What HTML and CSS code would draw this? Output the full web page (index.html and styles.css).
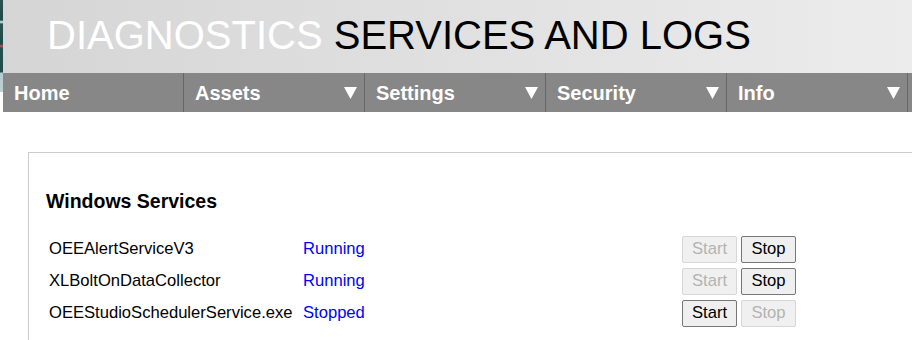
FILE: index.html
```html
<!DOCTYPE html>
<html>
<head>
<meta charset="utf-8">
<link rel="stylesheet" href="styles.css">
</head>
<body>
<div class="top">
  <div class="strip"></div>
  <div class="topmain">
    <header class="header">
      <h1 class="title"><span class="light">DIAGNOSTICS</span> SERVICES AND LOGS</h1>
    </header>
    <nav class="nav">
      <div class="navitem"><span>Home</span></div>
      <div class="navitem"><span>Assets</span><svg class="tri" width="13" height="13" viewBox="0 0 13 13"><polygon points="0,1 13,1 6.5,13" fill="#fff"/></svg></div>
      <div class="navitem"><span>Settings</span><svg class="tri" width="13" height="13" viewBox="0 0 13 13"><polygon points="0,1 13,1 6.5,13" fill="#fff"/></svg></div>
      <div class="navitem"><span>Security</span><svg class="tri" width="13" height="13" viewBox="0 0 13 13"><polygon points="0,1 13,1 6.5,13" fill="#fff"/></svg></div>
      <div class="navitem"><span>Info</span><svg class="tri" width="13" height="13" viewBox="0 0 13 13"><polygon points="0,1 13,1 6.5,13" fill="#fff"/></svg></div>
    </nav>
  </div>
</div>
<main class="content">
  <section class="panel">
    <h2 class="panel-title">Windows Services</h2>
    <div class="services">
      <div class="name">OEEAlertServiceV3</div>
      <div class="status">Running</div>
      <div class="actions"><button class="btn" disabled>Start</button><button class="btn">Stop</button></div>

      <div class="name">XLBoltOnDataCollector</div>
      <div class="status">Running</div>
      <div class="actions"><button class="btn" disabled>Start</button><button class="btn">Stop</button></div>

      <div class="name">OEEStudioSchedulerService.exe</div>
      <div class="status">Stopped</div>
      <div class="actions"><button class="btn">Start</button><button class="btn" disabled>Stop</button></div>
    </div>
  </section>
</main>
</body>
</html>
```
FILE: styles.css
```css
html, body {
  margin: 0;
  padding: 0;
  background: #fff;
  overflow: hidden;
}
body {
  font-family: "Liberation Sans", Arial, sans-serif;
  width: 912px;
  height: 340px;
}
.top {
  display: flex;
  align-items: flex-start;
}
.strip {
  width: 3px;
  height: 92px;
  flex: none;
  background: linear-gradient(to bottom, #2f4f4f 0, #1d4a47 20px, #e6f0f0 22px, #2a5452 24px, #1e4845 44px, #c0505a 46px, #24504d 48px, #234c4a 72px, #b6cbd0 73px, #bcd0d4 92px);
}
.topmain {
  flex: 1;
  min-width: 0;
}
.header {
  height: 73px;
  background: linear-gradient(to right, #d5d5d5, #ececec);
  padding-left: 44px;
  box-sizing: border-box;
  overflow: hidden;
}
.title {
  margin: 0;
  font-weight: normal;
  font-size: 40px;
  line-height: 70px;
  color: #000;
  white-space: nowrap;
}
.light {
  color: #fff;
}
.nav {
  display: flex;
  height: 39px;
  background: #878787;
  overflow: hidden;
}
.navitem {
  width: 181px;
  flex: none;
  box-sizing: border-box;
  border-right: 1px solid #666;
  display: flex;
  align-items: center;
  justify-content: space-between;
  padding: 2px 7px 0 11px;
  color: #fff;
  font-weight: bold;
  font-size: 20px;
}
.tri {
  display: block;
  margin-top: -2px;
}
.content {
  padding: 40px 0 0 28px;
}
.panel {
  height: 188px;
  border: 1px solid #cccccc;
  border-right: none;
  border-bottom: none;
  box-sizing: border-box;
  padding: 35px 0 0 17px;
  overflow: hidden;
}
.panel-title {
  margin: 0 0 19px 0;
  font-size: 19.5px;
  font-weight: bold;
  line-height: 26px;
}
.services {
  display: grid;
  grid-template-columns: 254px 379px auto;
  grid-auto-rows: 32px;
  align-items: center;
  padding-left: 3px;
  font-size: 16.6px;
}
.status {
  color: #0000ff;
}
.actions {
  display: flex;
  gap: 4px;
}
.btn {
  font-family: "Liberation Sans", Arial, sans-serif;
  font-size: 16.6px;
  width: 55px;
  height: 27px;
  padding: 0;
  background: #efefef;
  border: 1px solid #767676;
  border-radius: 2px;
  color: #000;
}
.btn:disabled {
  border-color: #d6d6d6;
  color: #b3b3b3;
  background: #f0f0f0;
}
```
